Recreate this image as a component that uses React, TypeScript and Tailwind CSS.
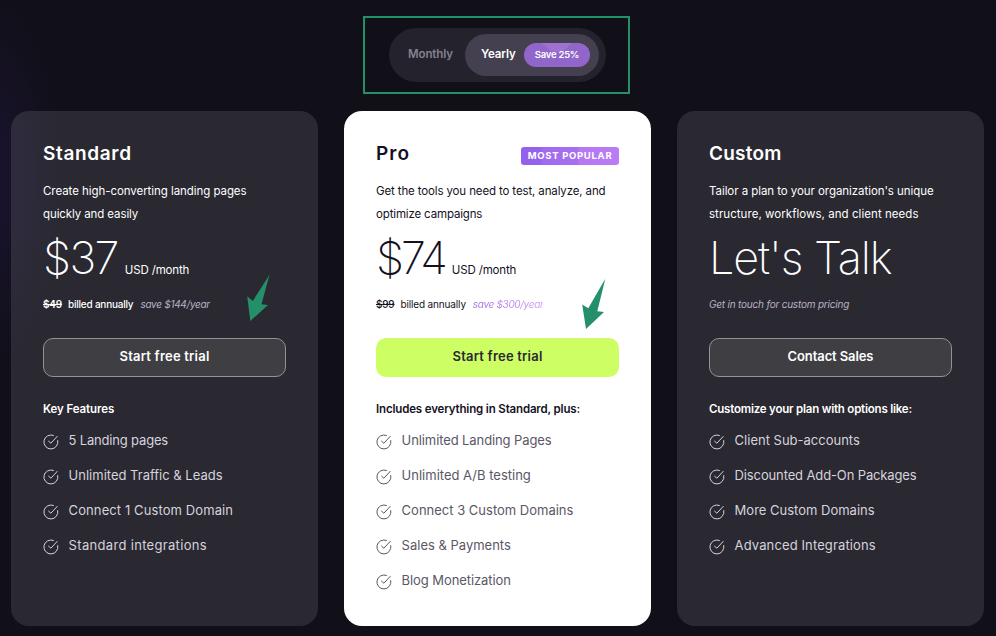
import type { ReactNode } from 'react';
import clsx from 'clsx';

interface Label {
  text: string;
  className?: string;
}

interface Plan {
  id: string;
  name: Label;
  badge?: string;
  description: Label[];
  price: Label;
  unit?: string;
  billing: ReactNode;
  cta: Label;
  featuresTitle: Label;
  features: Label[];
  featured?: boolean;
}

const plans: Plan[] = [
  {
    id: 'standard',
    name: { text: 'Standard', className: 'tracking-[0.65px]' },
    description: [
      { text: 'Create high-converting landing pages', className: 'tracking-[-0.06px]' },
      { text: 'quickly and easily', className: 'tracking-[-0.1px]' },
    ],
    price: { text: '$37', className: 'tracking-[-1.6px]' },
    unit: 'USD /month',
    billing: (
      <>
        <s className="font-semibold tracking-[-0.2px]">$49</s>
        <span className="ml-1.5 font-medium tracking-[-0.22px]">billed annually</span>
        <em className="ml-[7px] tracking-[-0.28px] text-[#b9b3c6]">save $144/year</em>
      </>
    ),
    cta: { text: 'Start free trial', className: 'tracking-[0.22px]' },
    featuresTitle: { text: 'Key Features', className: 'tracking-[-0.1px]' },
    features: [
      { text: '5 Landing pages', className: 'tracking-[-0.18px]' },
      { text: 'Unlimited Traffic & Leads' },
      { text: 'Connect 1 Custom Domain', className: 'tracking-[0.1px]' },
      { text: 'Standard integrations', className: 'tracking-[0.32px]' },
    ],
  },
  {
    id: 'pro',
    name: { text: 'Pro', className: 'tracking-[1px]' },
    badge: 'MOST POPULAR',
    description: [
      { text: 'Get the tools you need to test, analyze, and', className: 'tracking-[-0.13px]' },
      { text: 'optimize campaigns', className: 'tracking-[-0.15px]' },
    ],
    price: { text: '$74', className: 'tracking-[-3px]' },
    unit: 'USD /month',
    billing: (
      <>
        <s className="font-medium tracking-[-0.2px]">$99</s>
        <span className="ml-1.5 tracking-[-0.15px]">billed annually</span>
        <em className="ml-[7px] bg-linear-to-r from-[#a66bea] to-[#cf9df5] bg-clip-text tracking-[-0.33px] text-transparent">save $300/year</em>
      </>
    ),
    cta: { text: 'Start free trial', className: 'tracking-[0.22px]' },
    featuresTitle: { text: 'Includes everything in Standard, plus:', className: 'tracking-[-0.16px]' },
    features: [
      { text: 'Unlimited Landing Pages', className: 'tracking-[-0.1px]' },
      { text: 'Unlimited A/B testing' },
      { text: 'Connect 3 Custom Domains' },
      { text: 'Sales & Payments' },
      { text: 'Blog Monetization', className: 'tracking-[-0.08px]' },
    ],
    featured: true,
  },
  {
    id: 'custom',
    name: { text: 'Custom', className: 'tracking-[0.2px]' },
    description: [
      { text: "Tailor a plan to your organization's unique", className: 'tracking-[-0.06px]' },
      { text: 'structure, workflows, and client needs', className: 'tracking-[0.05px]' },
    ],
    price: { text: "Let's Talk", className: 'tracking-[-1.1px]' },
    billing: <em className="tracking-[-0.2px] text-[#b9b3c6]">Get in touch for custom pricing</em>,
    cta: { text: 'Contact Sales', className: 'tracking-[-0.1px]' },
    featuresTitle: { text: 'Customize your plan with options like:', className: 'tracking-[-0.21px]' },
    features: [
      { text: 'Client Sub-accounts' },
      { text: 'Discounted Add-On Packages', className: 'tracking-[-0.13px]' },
      { text: 'More Custom Domains' },
      { text: 'Advanced Integrations', className: 'tracking-[0.12px]' },
    ],
  },
];

function CheckIcon({ className }: { className?: string }) {
  return (
    <svg viewBox="0 0 16 16" fill="none" stroke="currentColor" strokeLinecap="round" strokeLinejoin="round" className={clsx('size-4', className)}>
      <path d="M10.4 1.4A7 7 0 1 0 14.8 6.6" />
      <path d="M5.6 7.2 7.9 9.2 14.2 2.4" />
    </svg>
  );
}

function BillingToggle() {
  return (
    <div className="flex h-[54px] w-[217px] items-center rounded-full bg-[#24222d] pr-[7px] pl-[19px]">
      <span className="flex-1 text-[11.5px] font-semibold tracking-[-0.1px] text-[#84818d]">Monthly</span>
      <div className="flex h-[42px] w-[134px] items-center justify-between rounded-full bg-[#45404f] pr-[9px] pl-4">
        <span className="text-[11.5px] font-semibold tracking-[-0.1px] text-white">Yearly</span>
        <span className="relative flex h-6 w-[66px] items-center justify-center rounded-full bg-[#9166cb] text-[9.5px] font-semibold tracking-[-0.25px] text-white">
          <svg className="absolute inset-0" viewBox="0 0 66 24" fill="#a072cf">
            <path d="M18 0H48L40 7.5Q33 10 26 7.5Z" />
          </svg>
          <span className="relative">Save 25%</span>
        </span>
      </div>
    </div>
  );
}

function PlanCard({ plan }: { plan: Plan }) {
  const light = plan.featured;

  return (
    <section
      className={clsx(
        'flex h-[515px] flex-col rounded-[18px] px-8 pt-[30px] whitespace-nowrap',
        light ? 'bg-white text-[#15111f]' : 'bg-[#ffffff1b] text-white',
      )}
    >
      <div className="flex h-[26px] items-center justify-between">
        <h2 className={clsx('text-[19px] leading-6 font-semibold', plan.name.className)}>{plan.name.text}</h2>
        {plan.badge && (
          <span className="mt-1 flex h-[18px] w-[98px] items-center justify-center rounded-[3px] bg-[linear-gradient(90deg,#9262ed_0,#9563ed_20px,#a06aef_21px,#a870f0_57px,#b678f3_58px,#ba7cf4_100%)] text-[9.5px] font-bold tracking-[0.7px] text-white">
            {plan.badge}
          </span>
        )}
      </div>

      <p className="mt-[13px] text-[11.5px] leading-[23px]">
        {plan.description.map((line) => (
          <span key={line.text} className={clsx('block', line.className)}>{line.text}</span>
        ))}
      </p>

      <div className="flex h-[58px] items-baseline">
        <span className={clsx('text-[45px] leading-[64px] font-extralight', plan.price.className)}>{plan.price.text}</span>
        {plan.unit && <span className="ml-[7px] text-[11.5px] tracking-[-0.15px]">{plan.unit}</span>}
      </div>

      <div className="mt-[10px] flex h-5 items-center text-[10px]">{plan.billing}</div>

      <button
        className={clsx(
          'mt-[24px] flex h-[39px] items-center justify-center rounded-[10px] pb-0.5 text-[13px] font-semibold',
          light ? 'bg-[#cdff64] text-[#2a2831]' : 'border border-[#94919b] bg-[#3f3e43] text-white',
        )}
      >
        <span className={plan.cta.className}>{plan.cta.text}</span>
      </button>

      <h3 className={clsx('mt-[22px] text-[11.5px] leading-5 font-semibold', plan.featuresTitle.className)}>{plan.featuresTitle.text}</h3>
      <ul className="mt-1">
        {plan.features.map((feature) => (
          <li key={feature.text} className={clsx('flex h-[35.1px] items-center gap-[9.6px] text-[13px]', light ? 'text-[#5a5766]' : 'text-[#d6d3de]')}>
            <CheckIcon className="mt-0.5" />
            <span className={feature.className}>{feature.text}</span>
          </li>
        ))}
      </ul>
    </section>
  );
}

export default function App() {
  return (
    <main className="relative h-[636px] w-[996px] overflow-hidden bg-[#110f18] bg-[radial-gradient(75px_200px_at_-10px_180px,#1a1430,#110f18)] font-['Inter',sans-serif]">
      <div className="ml-[363px] flex w-[267px] pt-4">
        <div className="flex h-[78px] w-full items-center justify-center border-2 border-[#23906a] pl-0.5">
          <BillingToggle />
        </div>
      </div>

      <div className="mt-[17px] ml-[11px] grid w-[973px] grid-cols-3 gap-[26px]">
        {plans.map((plan) => (
          <PlanCard key={plan.id} plan={plan} />
        ))}
      </div>

      {/* Arrows pointing at the trial buttons */}
      <svg className="absolute top-[274px] left-[246px] h-[48px] w-[26px] text-[#23906a]" viewBox="0 0 26 48" fill="currentColor">
        <path d="M23.5 0.8 15.5 30.3 22 31 4.3 47 1.2 22.3 6.8 27Z" />
      </svg>
      <svg className="absolute top-[278px] left-[581px] h-[52px] w-[26px] text-[#23906a]" viewBox="0 0 26 52" fill="currentColor">
        <path d="M24.3 0.8 16.3 33.3 23 34 5 51 1.2 26.5 7.3 30.3Z" />
      </svg>
    </main>
  );
}
